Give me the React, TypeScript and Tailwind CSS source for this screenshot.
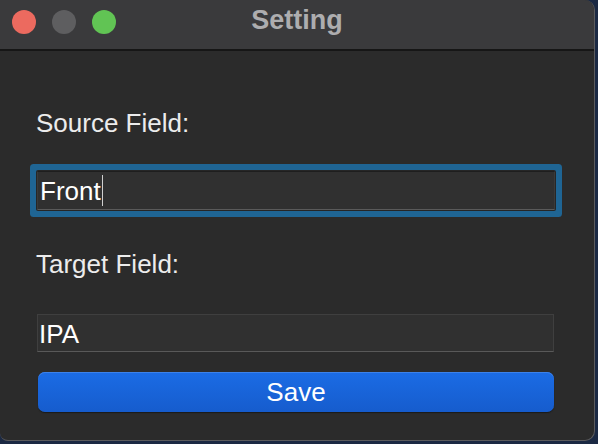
import React from 'react';

const font = { fontFamily: '"Liberation Sans", Arial, sans-serif' };

function TrafficLights() {
  return (
    <div className="flex gap-[16px] pl-[12px] pt-[10px]">
      <span className="h-[24px] w-[24px] rounded-full bg-[#ec6a5f]" />
      <span className="h-[24px] w-[24px] rounded-full bg-[#5e5e60]" />
      <span className="h-[24px] w-[24px] rounded-full bg-[#61c454]" />
    </div>
  );
}

export default function App() {
  return (
    <div className="h-[444px] w-[598px] overflow-hidden bg-[#1b2943]" style={font}>
      <div className="flex h-[441px] w-[595px] flex-col overflow-hidden rounded-r-[10px] rounded-bl-[8px] border-r border-b border-[#5b5b5d] bg-[#2b2b2b]">
        {/* Title bar */}
        <div className="relative h-[51px] shrink-0 border-b-[2px] border-[#161616] bg-[#3a3a3c]">
          <TrafficLights />
          <div className="absolute inset-x-0 top-[4px] text-center text-[27px] font-bold leading-[32px] text-[#adadaf]">
            Setting
          </div>
        </div>

        {/* Body */}
        <div className="flex flex-col pl-[37px] pt-[57px]">
          <div className="-ml-[1px] text-[26px] leading-[30px] text-[#ececec]">Source Field:</div>

          <div className="mt-[33px] h-[39px] w-[518px] rounded-[1px] border border-[#3a3a3a] border-t-[#1e1e1e] border-b-[#5a5a5a] bg-[#303030] pl-[2px] pt-[2px] text-[26px] leading-[35px] text-white shadow-[0_0_0_1px_#262626,0_0_0_7px_#1f6594]">
            Front
            <span className="ml-[1px] inline-block h-[31px] w-px bg-[#cfcfcf] align-[-6px]" />
          </div>

          <div className="-ml-[1px] mt-[39px] text-[26px] leading-[30px] text-[#ececec]">Target Field:</div>

          <div className="mt-[35px] h-[38px] w-[517px] border border-[#3f3f3f] border-b-[#595959] bg-[#303030] pl-[1px] pt-[2px] text-[26px] leading-[35px] text-white">
            IPA
          </div>

          <button className="ml-[1px] mt-[20px] h-[40px] w-[516px] rounded-[7px] bg-gradient-to-b from-[#1b6ce5] to-[#165ccd] text-center text-[26px] leading-[38px] text-white shadow-[inset_0_1px_0_#3c82ea,0_1px_1px_#1a1a1a]">
            Save
          </button>
        </div>
      </div>
    </div>
  );
}
